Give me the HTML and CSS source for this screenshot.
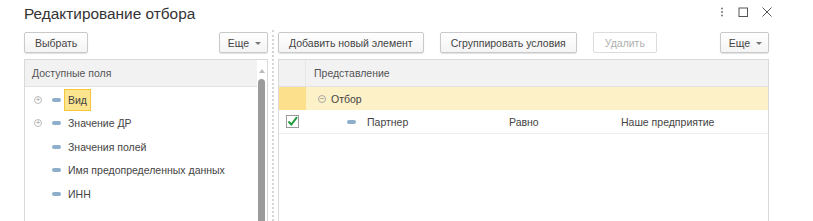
FILE: index.html
```html
<!DOCTYPE html>
<html lang="ru">
<head>
<meta charset="utf-8">
<title>Редактирование отбора</title>
<link rel="stylesheet" href="styles.css">
</head>
<body>
<div class="window">
  <div class="titlebar">
    <div class="title">Редактирование отбора</div>
    <div class="controls">
      <svg class="ctl" width="6" height="12" viewBox="0 0 6 12"><circle cx="3" cy="2.5" r="0.9" fill="#666"/><circle cx="3" cy="6" r="0.9" fill="#666"/><circle cx="3" cy="9.5" r="0.9" fill="#666"/></svg>
      <svg class="ctl" width="12" height="12" viewBox="0 0 12 12"><rect x="2" y="2" width="8.5" height="8.5" fill="none" stroke="#555" stroke-width="1"/></svg>
      <svg class="ctl" width="12" height="12" viewBox="0 0 12 12"><path d="M1.5 1.5 L10.5 10.5 M10.5 1.5 L1.5 10.5" stroke="#555" stroke-width="1"/></svg>
    </div>
  </div>
  <div class="main">
    <div class="col left">
      <div class="toolbar">
        <button class="btn">Выбрать</button>
        <span class="spacer"></span>
        <button class="btn more">Еще <span class="caret"></span></button>
      </div>
      <div class="panel">
        <div class="phead">Доступные поля</div>
        <div class="tree">
          <div class="trow"><span class="plus">+</span><span class="dash"></span><span class="label sel">Вид</span></div>
          <div class="trow"><span class="plus">+</span><span class="dash"></span><span class="label">Значение ДР</span></div>
          <div class="trow"><span class="noplus"></span><span class="dash"></span><span class="label">Значения полей</span></div>
          <div class="trow"><span class="noplus"></span><span class="dash"></span><span class="label">Имя предопределенных данных</span></div>
          <div class="trow"><span class="noplus"></span><span class="dash"></span><span class="label">ИНН</span></div>
        </div>
        <div class="scroll">
          <span class="uparrow"></span>
          <span class="thumb"></span>
        </div>
      </div>
    </div>
    <div class="splitter"></div>
    <div class="col right">
      <div class="toolbar">
        <button class="btn">Добавить новый элемент</button>
        <button class="btn">Сгруппировать условия</button>
        <button class="btn disabled">Удалить</button>
        <span class="spacer"></span>
        <button class="btn more">Еще <span class="caret"></span></button>
      </div>
      <div class="panel grid">
        <div class="grow head">
          <div class="c0"></div>
          <div class="c1">Представление</div>
        </div>
        <div class="grow group">
          <div class="c0"></div>
          <div class="c1"><span class="minus">−</span>Отбор</div>
        </div>
        <div class="grow item">
          <div class="c0">
            <svg width="13" height="13" viewBox="0 0 13 13"><rect x="0.5" y="0.5" width="12" height="12" fill="#fff" stroke="#9a9a9a"/><path d="M2.5 6.5 L5.3 9.5 L11 2.2" fill="none" stroke="#1f9a3a" stroke-width="2"/></svg>
          </div>
          <div class="c1 indent"><span class="dash"></span>Партнер</div>
          <div class="c2">Равно</div>
          <div class="c3">Наше предприятие</div>
        </div>
      </div>
    </div>
  </div>
</div>
</body>
</html>
```
FILE: styles.css
```css
* { box-sizing: border-box; }
html, body { margin: 0; padding: 0; background: #fff; overflow: hidden; }
body { width: 813px; height: 221px; font-family: "Liberation Sans", Arial, sans-serif; color: #4a4a4a; font-size: 10.5px; }
.window { padding: 0 0 0 24px; }
.titlebar { display: flex; align-items: center; justify-content: space-between; height: 30px; padding-right: 40px; }
.title { font-size: 15.4px; color: #333; margin-top: -3px; }
.controls { display: flex; align-items: center; gap: 12px; margin-top: -6px; }
.ctl { display: block; }
.main { display: flex; height: 191px; }
.col { display: flex; flex-direction: column; }
.left { width: 244px; }
.right { width: 491px; }
.splitter { width: 10px; position: relative; }
.splitter::before { content: ""; position: absolute; left: 4px; top: 0; bottom: 0; border-left: 2px dotted #d6d6d6; }
.toolbar { display: flex; align-items: center; height: 29px; padding-top: 2px; padding-bottom: 6px; gap: 16px; }
.spacer { flex: 1; }
.btn { font: inherit; font-size: 10.5px; color: #444; height: 21px; padding: 0 10px; border: 1px solid #c9c9c9; border-radius: 2px; background: linear-gradient(#fff, #f4f4f4); box-shadow: 0 1px 1px rgba(0,0,0,0.12); cursor: default; white-space: nowrap; flex: none; }
.btn.disabled { color: #b0b0b0; border-color: #dcdcdc; box-shadow: none; background: #fff; padding: 0 11px; }
.btn.more { padding: 0 6px 0 8px; }
.caret { display: inline-block; width: 0; height: 0; border-left: 3px solid transparent; border-right: 3px solid transparent; border-top: 3px solid #777; vertical-align: middle; margin-left: 3px; }
.panel { flex: 1; border: 1px solid #d9d9d9; border-bottom: none; position: relative; overflow: hidden; }
.left .panel { padding-right: 10px; }
.phead { height: 27px; background: #f2f2f2; border-bottom: 1px solid #e2e2e2; display: flex; align-items: center; padding-left: 7px; color: #555; }
.tree { padding-top: 1px; }
.trow { display: flex; align-items: center; height: 23.5px; padding-left: 9px; }
.plus { width: 8px; height: 8px; border: 1px solid #bbb; border-radius: 50%; font-size: 8px; line-height: 6px; text-align: center; color: #999; margin-right: 10px; }
.noplus { width: 8px; margin-right: 10px; }
.dash { display: inline-block; width: 9px; height: 4px; background: #8eaecb; border-radius: 2px; margin-right: 7px; }
.label { color: #444; }
.label.sel { background: #fde48f; border: 1px solid #f5c63b; padding: 0 3px; height: 22px; line-height: 20px; margin-left: -4px; }
.scroll { position: absolute; right: 1px; top: 0; bottom: 0; width: 8px; }
.uparrow { position: absolute; left: 1px; top: 9px; width: 0; height: 0; border-left: 3px solid transparent; border-right: 3px solid transparent; border-bottom: 4px solid #bbb; }
.thumb { position: absolute; left: 0; top: 19px; bottom: -10px; width: 7px; background: #9b9b9b; border-radius: 4px 4px 0 0; }
.grow { display: flex; align-items: center; }
.grow .c0 { width: 27px; flex: none; height: 100%; display: flex; align-items: center; justify-content: center; }
.grow.head { height: 27px; background: #f2f2f2; border-bottom: 1px solid #e2e2e2; color: #555; }
.grow.head .c0 { border-right: 1px solid #e6e6e6; }
.grow .c1 { padding-left: 8px; display: flex; align-items: center; }
.grow.group { height: 23px; background: #fdf1c8; }
.grow.group .c0 { background: #fce08c; }
.grow.group .c1 { padding-left: 12px; color: #444; }
.minus { display: inline-block; width: 8px; height: 8px; border: 1px solid #aaa; border-radius: 50%; font-size: 8px; line-height: 6px; text-align: center; color: #888; margin-right: 5px; }
.grow.item { height: 24px; border-bottom: 1px solid #ececec; }
.grow.item .c1 { width: 203px; padding-left: 41px; color: #444; }
.grow.item .c1 .dash { margin-right: 11px; }
.grow.item .c2 { width: 112px; color: #444; }
.grow.item .c3 { color: #444; }
```
